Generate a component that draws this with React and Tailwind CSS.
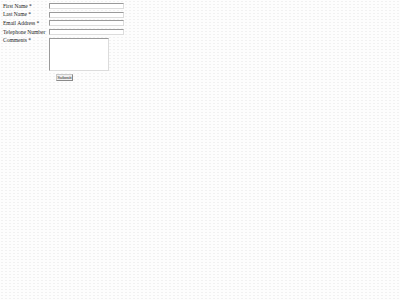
import React from 'react';

const fields = [
  { label: 'First Name *' },
  { label: 'Last Name *' },
  { label: 'Email Address *' },
  { label: 'Telephone Number' },
];

export default function App() {
  return (
    <div
      className="min-h-screen w-full bg-[#fdfdfd] bg-[radial-gradient(#f1f1f1_0.6px,transparent_0.7px)] bg-[size:4px_3px] text-[#222]"
      style={{ fontFamily: '"Liberation Serif", "Times New Roman", serif' }}
    >
      <form className="pl-[3px] pt-[3px] text-[5.5px] leading-none">
        <div className="flex flex-col gap-[2.7px]">
          {fields.map((f) => (
            <div key={f.label} className="flex items-center">
              <label className="w-[46px] shrink-0 pt-[0.5px]">{f.label}</label>
              <input
                type="text"
                className="h-[6px] w-[75px] bg-white border border-t-[#9a9a9a] border-l-[#9a9a9a] border-b-[#dcdcdc] border-r-[#dcdcdc] outline-none"
              />
            </div>
          ))}
          <div className="flex items-start">
            <label className="w-[46px] shrink-0 pt-[0.5px]">Comments *</label>
            <textarea className="h-[33px] w-[60px] resize-none bg-white border border-t-[#9a9a9a] border-l-[#9a9a9a] border-b-[#dcdcdc] border-r-[#dcdcdc] outline-none" />
          </div>
        </div>
        <div className="pl-[53px] pt-[3px]">
          <button
            type="button"
            className="h-[7px] w-[17px] border border-t-[#c8c8c8] border-l-[#c8c8c8] border-b-[#8a8a8a] border-r-[#8a8a8a] bg-[#f0f0f0] text-[5px] leading-none text-[#222]"
          >
            Submit
          </button>
        </div>
      </form>
    </div>
  );
}
